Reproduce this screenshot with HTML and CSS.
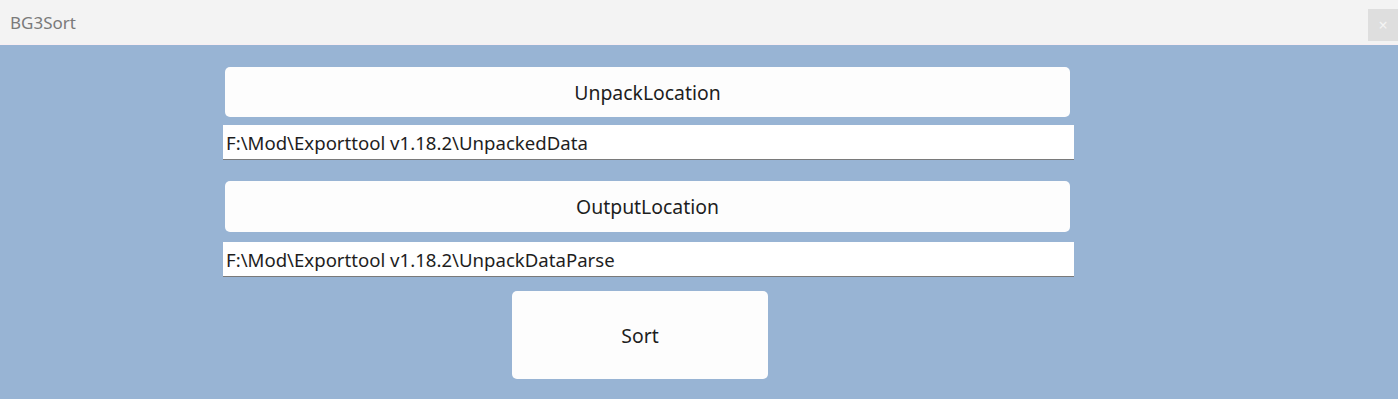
FILE: index.html
```html
<!DOCTYPE html>
<html lang="en">
<head>
    <meta charset="UTF-8">
    <meta name="viewport" content="width=device-width, initial-scale=1.0">
    <title>BG3Sort</title>
    <link rel="stylesheet" href="styles.css">
</head>
<body>
    <div class="window">
        <div class="title-bar">
            <span class="title">BG3Sort</span>
            <span class="close-btn">&times;</span>
        </div>
        <div class="content">
            <div class="column">
                <button class="path-btn">UnpackLocation</button>
                <input type="text" class="path-input" value="F:\Mod\Exporttool v1.18.2\UnpackedData">
                <button class="path-btn second">OutputLocation</button>
                <input type="text" class="path-input" value="F:\Mod\Exporttool v1.18.2\UnpackDataParse">
                <button class="sort-btn">Sort</button>
            </div>
        </div>
    </div>
</body>
</html>
```

FILE: styles.css
```css
body {
    margin: 0;
    padding: 0;
    font-family: "Noto Sans", "Open Sans", sans-serif;
    background-color: #98b4d4;
}
.window {
    width: 1398px;
    height: 399px;
    display: flex;
    flex-direction: column;
}
.title-bar {
    height: 44px;
    background-color: #f3f3f3;
    border-bottom: 1px solid #f8eef2;
    display: flex;
    align-items: center;
    justify-content: space-between;
}
.title {
    color: #7a7a7a;
    font-size: 17px;
    margin-left: 10px;
}
.close-btn {
    width: 30px;
    height: 32px;
    background-color: #dedede;
    color: #f4f4f4;
    font-size: 16px;
    display: flex;
    align-items: center;
    justify-content: center;
    margin-top: 6px;
}
.content {
    flex: 1;
    padding: 22px 0 0 223px;
}
.column {
    width: 851px;
    display: flex;
    flex-direction: column;
}
.path-btn {
    width: 845px;
    height: 50px;
    margin: 0 2px;
    background-color: #fdfdfd;
    border: none;
    border-radius: 5px;
    font-family: inherit;
    font-size: 19.4px;
    color: #1e1e1e;
}
.path-btn.second {
    margin-top: 21px;
    height: 51px;
}
.path-input {
    height: 35px;
    margin-top: 8px;
    padding: 0 3px;
    box-sizing: border-box;
    border: none;
    border-bottom: 1px solid #7a7a7a;
    background-color: #ffffff;
    font-family: inherit;
    font-size: 18.6px;
    color: #1e1e1e;
}
.second + .path-input {
    margin-top: 10px;
}
.sort-btn {
    width: 256px;
    height: 88px;
    margin: 14px 0 0 289px;
    background-color: #fdfdfd;
    border: none;
    border-radius: 5px;
    font-family: inherit;
    font-size: 19.4px;
    color: #1e1e1e;
}
```
